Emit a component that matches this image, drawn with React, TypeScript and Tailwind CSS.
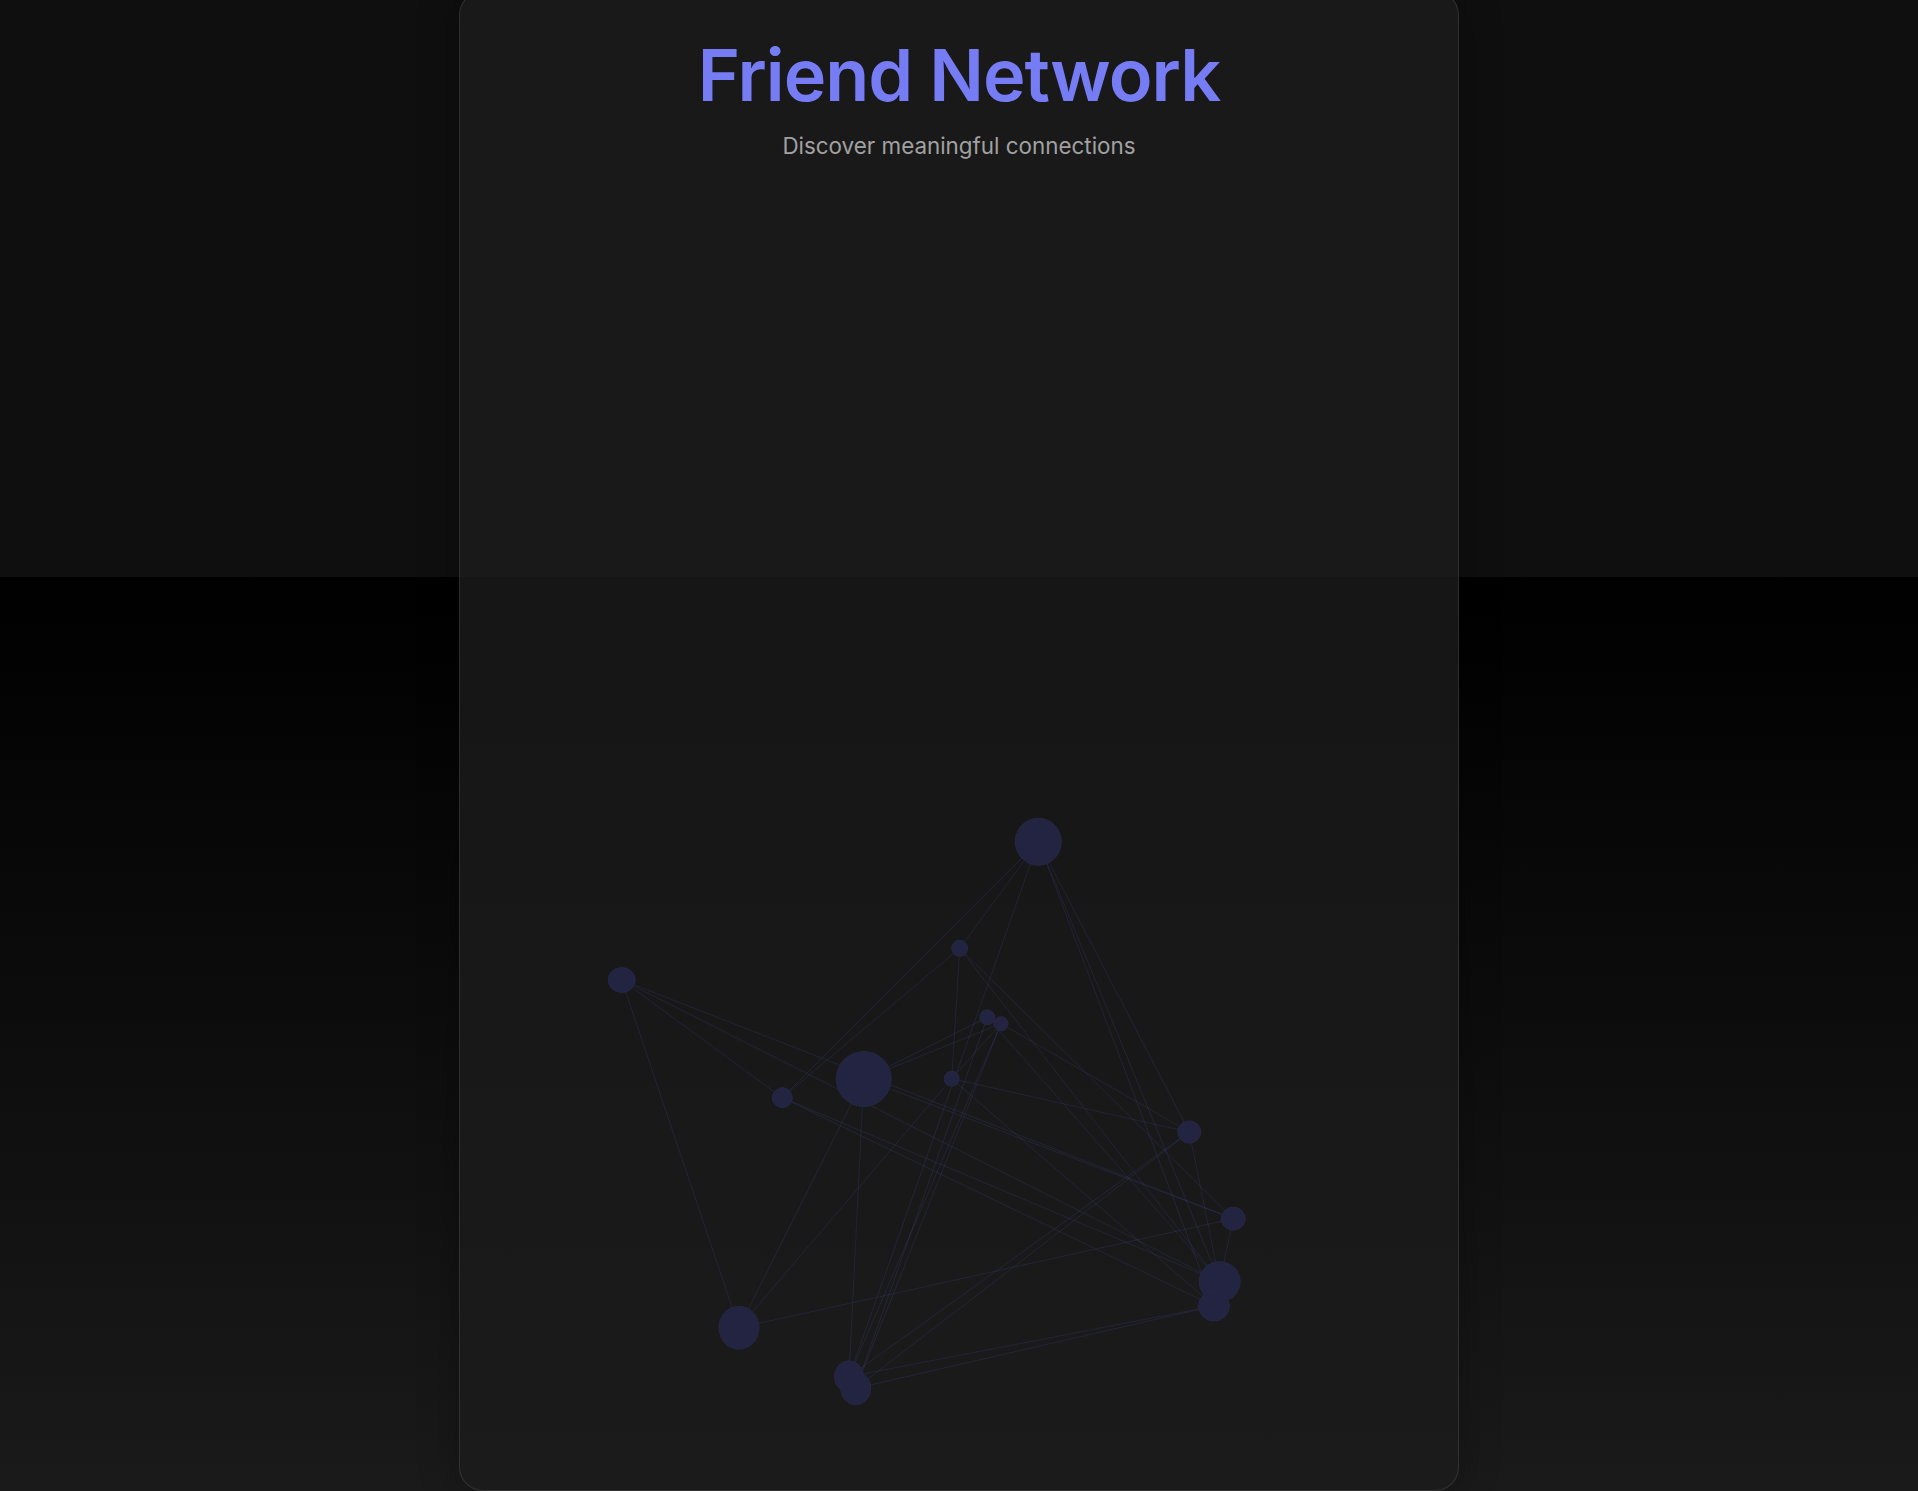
type Node = { id: number; x: number; y: number; rx: number; ry: number };

// graph layout in svg coordinates (svg is 998 x 1250)
const nodes: Node[] = [
  { id: 1, x: 578.3, y: 641.7, rx: 23, ry: 23.5 },
  { id: 2, x: 499.7, y: 748.3, rx: 8, ry: 8 },
  { id: 3, x: 161.7, y: 780, rx: 13.5, ry: 12.5 },
  { id: 4, x: 527.3, y: 817.3, rx: 7.5, ry: 7.5 },
  { id: 5, x: 541, y: 823.7, rx: 7, ry: 7 },
  { id: 6, x: 403.7, y: 879, rx: 27.5, ry: 27.5 },
  { id: 7, x: 491.7, y: 878.7, rx: 7.5, ry: 7.5 },
  { id: 8, x: 322.3, y: 897.7, rx: 10, ry: 10 },
  { id: 9, x: 729.3, y: 932, rx: 11.5, ry: 11 },
  { id: 10, x: 773.3, y: 1018.7, rx: 12, ry: 11.5 },
  { id: 11, x: 759.7, y: 1081.7, rx: 20.5, ry: 20 },
  { id: 12, x: 754, y: 1106, rx: 15.5, ry: 15 },
  { id: 13, x: 279, y: 1127.7, rx: 20, ry: 21.5 },
  { id: 14, x: 389, y: 1176.7, rx: 14.5, ry: 16 },
  { id: 15, x: 395.7, y: 1188.3, rx: 15, ry: 16.5 },
];

const links: [number, number][] = [
  [1, 2], [1, 8], [1, 14], [1, 9], [1, 11], [1, 12],
  [2, 8], [2, 7], [2, 11], [2, 10],
  [3, 8], [3, 13], [3, 10], [3, 11],
  [6, 4], [6, 5], [6, 13], [6, 14], [6, 10],
  [7, 9], [7, 13], [7, 12], [5, 7],
  [5, 9], [4, 15], [5, 14], [5, 15], [4, 11],
  [9, 11], [9, 14], [9, 15], [10, 11],
  [13, 10], [14, 12], [15, 12], [8, 11], [8, 12],
];

function NetworkGraph() {
  const byId = (id: number) => nodes.find((n) => n.id === id)!;
  return (
    <svg viewBox="0 0 998 1250" className="block w-full h-[1250px]">
      <g stroke="rgba(99,102,241,0.14)" strokeWidth={1}>
        {links.map(([a, b], i) => {
          const s = byId(a);
          const t = byId(b);
          return <line key={i} x1={s.x} y1={s.y} x2={t.x} y2={t.y} />;
        })}
      </g>
      <g>
        {nodes.map((n) => (
          <ellipse
            key={n.id}
            cx={n.x}
            cy={n.y}
            rx={n.rx}
            ry={n.ry}
            fill="#232441"
            stroke="#262744"
            strokeWidth={1}
          />
        ))}
      </g>
    </svg>
  );
}

export default function App() {
  return (
    <div className="h-[1491px] overflow-hidden bg-[linear-gradient(to_bottom,#0f0f0f_0px,#0f0f0f_577px,#000000_577px,#1a1a1a_100%)] font-['Inter',sans-serif]">
      <div className="mx-auto mt-[-9px] w-[1000px] rounded-3xl border border-white/10 bg-[rgba(28,28,28,0.8)] pt-[47px] pb-10 shadow-[0_0_40px_rgba(0,0,0,0.3)]">
        {/* Header */}
        <div className="flex flex-col items-center">
          <h1 className="text-7xl leading-none font-semibold tracking-[-1px] text-[#767cf4]">Friend Network</h1>
          <p className="mt-[18px] text-[22.4px] leading-[33px] text-neutral-400">Discover meaningful connections</p>
        </div>

        {/* Graph */}
        <div className="mt-[38px]">
          <NetworkGraph />
        </div>
      </div>
    </div>
  );
}
